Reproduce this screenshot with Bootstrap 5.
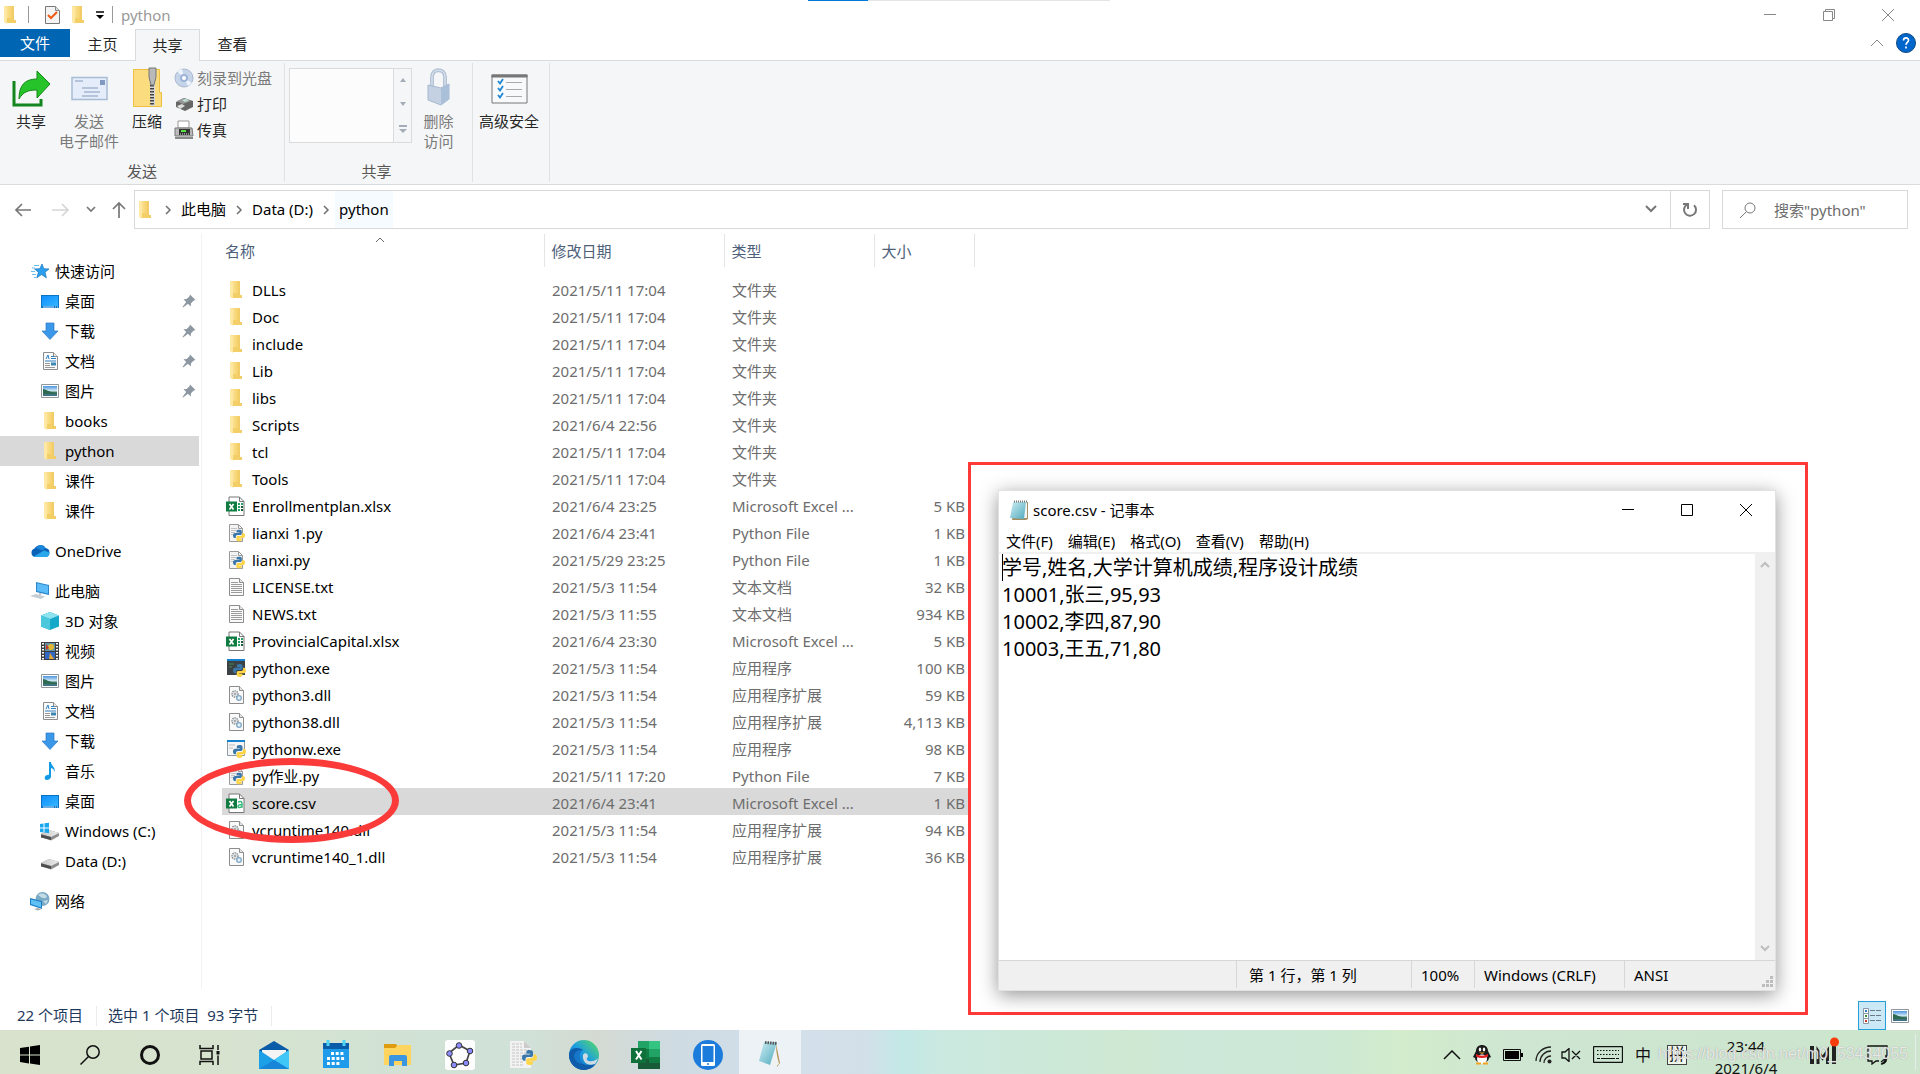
<!DOCTYPE html>
<html lang="zh-CN">
<head>
<meta charset="utf-8">
<meta name="viewport" content="width=device-width, initial-scale=1">
<title>python</title>
<link href="https://cdn.jsdelivr.net/npm/bootstrap@5.3.0/dist/css/bootstrap.min.css" rel="stylesheet">
<style>
  body { font-family: "Noto Sans", "Noto Sans CJK SC", sans-serif; font-size: 15px; line-height: 20px; color: #000; background: #fff; overflow: hidden; }
  button { background: none; border: 0; padding: 0; color: inherit; line-height: 20px; }
  a { color: inherit; text-decoration: none; }
  svg { display: block; flex: none; }
  .i20 { width: 20px; height: 20px; }
  .i30 { width: 30px; height: 30px; }

  /* title bar */
  .titlebar { height: 29px; padding-right: 3px; color: #999; }
  .titlebar .sep { width: 1px; height: 17px; background: #999; }
  .loadline { top: 0; left: 808px; width: 302px; height: 1px; background: linear-gradient(90deg, #0078d7 20%, #e5e5e5 20%); }
  .winbtn { width: 59px; height: 29px; }

  /* ribbon */
  .tabs { height: 32px; border-bottom: 1px solid #dadbdc; color: #262626; }
  .tabs .tab { height: 32px; width: 65px; padding-bottom: 2px; }
  .tabs .filetab { width: 70px; height: 28px; background: #0065b3; color: #fff; padding: 0; }
  .tabs .current { background: #f5f6f7; border: 1px solid #dadbdc; border-bottom: 0; }
  .ribbon { height: 124px; background: #f5f6f7; border-bottom: 1px solid #dadbdc; color: #262626; padding-top: 2px; }
  .rgroup { height: 119px; border-right: 1px solid #e0e1e2; }
  .rgroup .caption { color: #555; height: 20px; margin-bottom: 1px; }
  .big { display: flex; flex-direction: column; align-items: center; width: 58px; padding-top: 4px; white-space: nowrap; }
  .big svg { width: 40px; height: 40px; margin-bottom: 4px; }
  .off { color: #7a7a7a; }
  .smallbtns { padding-top: 2px; }
  .smallbtn { display: flex; align-items: center; gap: 3px; height: 26px; white-space: nowrap; }
  .gallery { width: 123px; height: 75px; margin-top: 5px; border: 1px solid #dadbdc; background: #fcfcfc; }
  .gallery + .big { width: 53px; }
  .gallery .scroller { width: 18px; border-left: 1px solid #dadbdc; background: #f5f6f7; }

  /* address bar */
  .addr { height: 49px; padding: 5px 12px 5px 14px; color: #000; }
  .arrows { width: 120px; gap: 16px; }
  .box { height: 39px; border: 1px solid #d9d9d9; }
  .crumbs { gap: 5px; }
  .crumb { height: 37px; line-height: 37px; padding: 0 4px; }
  .crumb.hot { background: #f6fbff; }
  .refresh { width: 39px; height: 37px; border-left: 1px solid #d9d9d9; }
  .search { width: 186px; margin-left: 12px; padding-left: 17px; gap: 18px; }
  .search input { border: 0; outline: 0; width: 120px; background: none; padding: 0; }
  .search input::placeholder { color: #6d6d6d; opacity: 1; }

  /* navigation pane */
  .side { width: 202px; padding-top: 22px; border-right: 1px solid #f2f2f2; margin-bottom: 12px; }
  .side a { display: flex; align-items: center; height: 30px; padding-left: 40px; gap: 5px; margin-right: 2px; }
  .side a.root { padding-left: 30px; }
  .side a.gapped { margin-top: 10px; }
  .side a.picked { background: #d9d9d9; }
  .side .pin { margin-left: auto; margin-right: 3px; }

  /* file table */
  .files { table-layout: fixed; width: 752px; border-collapse: collapse; }
  .files th { font-weight: 400; color: #4c607a; height: 33px; padding: 0 0 0 7px; border-right: 1px solid #e5e5e5; }
  .files th:first-child { padding-left: 3px; }
  .files td { height: 27px; padding: 2px 0 0 8px; color: #6d6d6d; white-space: nowrap; overflow: hidden; text-overflow: ellipsis; }
  .files td:first-child { color: #000; padding-left: 4px; }
  .files td:last-child { text-align: right; padding-right: 9px; }
  .files .picked td { background: #d9d9d9; }
  .files .picked td:last-child { background: linear-gradient(90deg, #d9d9d9 95%, #fff 95%); }
  .files .name { display: flex; align-items: center; gap: 6px; }
  .files .head + tbody::before { content: ""; display: block; height: 8px; }
  .sortmark { position: absolute; left: 157px; top: 2px; }
  .ring { left: 184px; top: 524px; width: 215px; height: 85px; border: 7px solid #fb3a3a; border-radius: 50%; pointer-events: none; }

  /* notepad */
  .frame { left: 968px; top: 228px; width: 840px; height: 553px; border: 3px solid #ff3838; padding: 25px 29px 21px 27px; }
  .pad { border: 1px solid #e2e2e2; box-shadow: 0 4px 18px rgba(0,0,0,.42); background: #fff; }
  .pad .cap { height: 38px; padding-left: 10px; }
  .pad .menu { height: 23px; padding-left: 7px; gap: 15px; }
  .pad .paper { border-top: 2px solid #f0f0f0; }
  .pad textarea { border: 0; outline: 0; resize: none; padding: 0 3px; font-size: 20px; line-height: 27px; overflow: hidden; }
  .caret { left: 3px; top: 0; width: 1px; height: 27px; background: #000; }
  .pad .bar { width: 20px; background: #f0f0f0; padding: 7px 0; }
  .pad .foot { height: 30px; background: #f0f0f0; border-top: 1px solid #d7d7d7; }
  .pad .foot span { border-left: 1px solid #d7d7d7; height: 27px; line-height: 29px; padding-left: 9px; }
  .pad .foot .where { padding-left: 12px; }

  /* status bar and taskbar */
  .status { height: 29px; color: #1e395b; padding: 0 10px 0 17px; }
  .status span { padding-bottom: 2px; }
  .status .rule { width: 1px; height: 20px; background: #ececec; margin: 0 11px 0 13px; }
  .viewbtn { width: 28px; height: 29px; border: 1px solid #26a0da; background: #cbe8f6; }
  .task { height: 44px; background: linear-gradient(90deg, #d8e2cc 0, #d7e3cf 12%, #d0e2d5 22%, #d0e2d8 27%, #d4dad2 31%, #cfdbe2 35%, #d3dfea 41%, #d3dfe8 45%, #c2e8e6 47%, #cbe9e0 49%, #cee8d2 59%, #cde8d9 62%, #cde8d4 69%, #d2eccc 73%, #cee6d2 79%, #cce5cc 100%); }
  .task .slot { width: 60px; height: 44px; padding-top: 6px; display: flex; align-items: center; justify-content: center; }
  .task .app { width: 62px; }
  .task .apps { margin-left: 3px; }
  .task .live { background: rgba(255,255,255,.6); }
  .tray { color: #111; padding: 5px 10px 0 0; }
  .tray .mi { margin: 0 19px 8px 17px; }
  .clock { width: 66px; line-height: 22px; white-space: nowrap; margin: 0 6px 0 18px; }
  .pinyin { width: 20px; height: 20px; border: 1px solid #444; background: #eef6ee; line-height: 17px; font-size: 16px; }
  .watermark { right: 12px; top: 14px; font: 16px/20px "Liberation Sans", sans-serif; color: rgba(255,255,255,.8); text-shadow: 0 0 1px #888; pointer-events: none; }
</style>
</head>
<body>
<svg width="0" height="0" class="position-absolute" aria-hidden="true">
  <defs>
    <linearGradient id="gf" x1="0" x2="1"><stop offset="0" stop-color="#ffe9a6"/><stop offset="1" stop-color="#f3cb5c"/></linearGradient>
    <linearGradient id="gb" x1="0" y1="0" x2="1" y2="1"><stop offset="0" stop-color="#0f8fff"/><stop offset="1" stop-color="#35b6ff"/></linearGradient>
    <linearGradient id="gsky" x1="0" y1="0" x2="0" y2="1"><stop offset="0" stop-color="#4d94e0"/><stop offset=".5" stop-color="#d5ecf5"/><stop offset=".6" stop-color="#4c7f6c"/><stop offset="1" stop-color="#3d6f8b"/></linearGradient>
    <linearGradient id="gdisk" x1="0" x2="1"><stop offset="0" stop-color="#c9c9c9"/><stop offset="1" stop-color="#ececec"/></linearGradient>
    <linearGradient id="gedge" x1="0" y1="1" x2="1" y2="0"><stop offset="0" stop-color="#0c59a4"/><stop offset=".5" stop-color="#1b9de2"/><stop offset="1" stop-color="#5ee05a"/></linearGradient>
    <linearGradient id="gnote" x1="0" y1="0" x2="1" y2="1"><stop offset="0" stop-color="#cdeef3"/><stop offset="1" stop-color="#4fa9bd"/></linearGradient>
    <symbol id="folder" viewBox="0 0 20 20"><path d="M4 1h10v14l2 1v2H6z" fill="#f4cf68"/><path d="M4 1h10v12H4z" fill="url(#gf)"/><path d="M12 1h2v14h2v2h-4z" fill="#f2cc66"/><path d="M4 1l3 2v16l-3-2z" fill="#ffe8a3"/></symbol>
    <symbol id="py" viewBox="0 0 12 12"><path d="M6 0C3.600 0 3.500 1 3.500 1.800V3h3v.5H2C.8 3.500 0 4.500 0 6s.7 2.600 1.800 2.600h1V7.200c0-1 .8-1.700 1.800-1.700h2.800c.8 0 1.400-.7 1.400-1.500V1.800C8.800.6 7.800 0 6 0z" fill="#3b77a8"/><path d="M6.200 12c2.300 0 2.500-1 2.500-1.800V9h-3v-.5h4.500C11.400 8.500 12 7.500 12 6s-.7-2.600-1.800-2.600h-.9v1.400c0 1-.8 1.700-1.800 1.700H4.800c-.8 0-1.400.7-1.400 1.500v2.200C3.400 11.400 4.400 12 6.200 12z" fill="#ffd548"/></symbol>
    <symbol id="page" viewBox="0 0 20 20"><path d="M3.500 1.500h10l4 4v13h-14z" fill="#fafafa" stroke="#8d8d8d"/><path d="M13.500 1.500v4h4" fill="#e7e7e7" stroke="#8d8d8d"/></symbol>
    <symbol id="txt" viewBox="0 0 20 20"><use href="#page"/><path d="M5 5.500h7M5 7.500h11M5 9.500h11M5 11.500h11M5 13.500h11M5 15.500h11" stroke="#9b9b9b"/></symbol>
    <symbol id="doc" viewBox="0 0 20 20"><use href="#page"/><path d="M6 8l2-4 1 4" stroke="#2c7fc1" fill="none"/><path d="M11 5.500h3M11 7.500h5M5 10h11" stroke="#2c7fc1"/><path d="M5 12.500h5M5 14.500h5M5 16.500h10" stroke="#999"/><path d="M11 11.500h5v3h-5z" fill="#3a86b4"/></symbol>
    <symbol id="dll" viewBox="0 0 20 20"><use href="#page"/><circle cx="9" cy="9" r="3" fill="none" stroke="#8b9299" stroke-width="1.500" stroke-dasharray="1.500 .7"/><circle cx="9" cy="9" r="1" fill="none" stroke="#8b9299"/><circle cx="13" cy="13" r="2.300" fill="#dff0fa" stroke="#7fa6c4" stroke-width="1.300"/></symbol>
    <symbol id="pyfile" viewBox="0 0 20 20"><path d="M3.500 1.500h9l4 4v13h-13z" fill="#f3f3f3" stroke="#9a9a9a"/><path d="M12.500 1.500v4h4" fill="none" stroke="#9a9a9a"/><path d="M5 5.500h6M5 7.500h5M5 9.500h4M5 11.500h3" stroke="#c2c2c2"/><use href="#py" x="7" y="6.500" width="12" height="12"/></symbol>
    <symbol id="exe" viewBox="0 0 20 20"><path d="M1 2h18v15H1z" fill="#3b4145"/><path d="M1 1h18v2H1z" fill="#1482d0"/><path d="M3 6h5M3 9h3" stroke="#3f8b4e"/><use href="#py" x="7" y="6" width="13" height="13"/></symbol>
    <symbol id="exew" viewBox="0 0 20 20"><path d="M1.500 2.500h17v14h-17z" fill="#f5f5f5" stroke="#8d9aa5"/><path d="M1 1h18v2H1z" fill="#1482d0"/><path d="M3 6h6M3 9h4" stroke="#bbb"/><use href="#py" x="7" y="6" width="13" height="13"/></symbol>
    <symbol id="xls0" viewBox="0 0 20 20"><path d="M3 1h10.500L18 5.500V19.500H3z" fill="#fff" stroke="#777"/><path d="M13.500 1v4.500H18" fill="none" stroke="#777"/><path d="M0 5.500h11v10H0z" fill="#107c41"/><path d="M3.500 8l4 5.500M7.500 8l-4 5.500" stroke="#fff" stroke-width="1.700"/></symbol>
    <symbol id="xls" viewBox="0 0 20 20"><use href="#xls0"/><path d="M12 8h2M12 11h2M12 14h2M15 8h2" stroke="#21a366" stroke-width="2"/><path d="M15 11h2M15 14h2" stroke="#185c37" stroke-width="2"/></symbol>
    <symbol id="csv" viewBox="0 0 20 20"><use href="#xls0"/><path d="M12 9.200c3-1.600 4-.4 4 1.500v4M16 11.500c-2.800 0-4 .5-4 1.800 0 1.800 3.500 1.600 4 0" fill="none" stroke="#33b979" stroke-width="1.500"/></symbol>
    <symbol id="desk" viewBox="0 0 20 20"><path d="M1 4h18v13H1z" fill="#0b73c4"/><path d="M2 5h16v10H2z" fill="url(#gb)"/><path d="M3 16h11M15 16h1M17 16h1" stroke="#cbe9ff"/></symbol>
    <symbol id="down" viewBox="0 0 20 20"><path d="M6 2h8v8h4l-8 8.500L2 10h4z" fill="#3b97e8" stroke="#2b79c7" stroke-width=".7"/></symbol>
    <symbol id="pic" viewBox="0 0 20 20"><path d="M1.500 3.500h17v13h-17z" fill="#fff" stroke="#8f979d"/><path d="M3 5h14v10H3z" fill="url(#gsky)"/><path d="M3 8c3 0 5 3 14 4v1H3z" fill="#2f6a52"/></symbol>
    <symbol id="star" viewBox="0 0 20 20"><path d="M12 3l1.800 4.700 5.200.3-4 3.300 1.400 5.500-4.900-3.200-4.700 3.200 1.600-5.500L4.600 8l5.200-.3z" fill="#2b9fee" stroke="#1472b8" stroke-width=".7"/><path d="M4 4.500h5M2 7h3M1 10.500h4M2 13.500h4M4 16.500h2" stroke="#67bdf2"/></symbol>
    <symbol id="cloud" viewBox="0 0 20 20"><path d="M4.500 16a4.500 4.500 0 0 1 0-8.500 6.500 6.500 0 0 1 11-.5 4.600 4.600 0 0 1 .5 9z" fill="#0a63b6"/><path d="M3 16L14 9.500l5.500 2a4.300 4.300 0 0 1-3.500 4.500z" fill="#28a8ea"/><path d="M9 4.200c4-1 6 1 6.500 3L12 9.500 6 7z" fill="#1a86d9"/></symbol>
    <symbol id="pc" viewBox="0 0 20 20"><path d="M6 1l13 3v10L6 11z" fill="#2b87cd"/><path d="M7 2.300l11 2.500v7.800L7 10z" fill="#5bbcf7"/><path d="M0 15l6-2 9 2.500-4 2.500z" fill="#c5ccd2"/><path d="M10 12v2" stroke="#889"/></symbol>
    <symbol id="cube" viewBox="0 0 20 20"><path d="M10 1l9 3.500v11L10 19l-9-3.500v-11z" fill="#16a8c9"/><path d="M10 1l9 3.500L10 8 1 4.500z" fill="#8fe3ef"/><path d="M1 4.500L10 8v11l-9-3.500z" fill="#4cc8dd"/></symbol>
    <symbol id="film" viewBox="0 0 20 20"><path d="M1 1h18v18H1z" fill="#3d3d3d"/><path d="M5 2h10v8H5z" fill="#5f94ac"/><path d="M5 11h10v7H5z" fill="#3469c3"/><circle cx="11" cy="6" r="3" fill="#e3b730"/><path d="M10 12l4 6H9z" fill="#e3a630"/><path d="M6 3l3 4-3 2z" fill="#c03a2b"/><path d="M3 2v17M17 2v17" stroke="#fff" stroke-width="2" stroke-dasharray="1.500 1.500"/></symbol>
    <symbol id="note" viewBox="0 0 20 20"><path d="M9 1h2c0 4 5 5 3.500 10-.5-3-2-3.500-3.500-4v8c0 3-2.500 4-4.500 4S4 16 6 14.500c1-.8 2-.9 3-.8z" fill="#139ae6"/></symbol>
    <symbol id="disk" viewBox="0 0 20 20"><path d="M1 12l8-4 10 3v3l-8 4.500L1 15z" fill="#8e8e8e"/><path d="M1 12l8-4 10 3-8 4z" fill="url(#gdisk)"/><path d="M1 12.500l10 2.500v3L1 15.500z" fill="#4e4e4e"/></symbol>
    <symbol id="diskc" viewBox="0 0 20 20"><use href="#disk" y="1"/><path d="M0 3l3.500-.5v4H0zM4.500 2.300L9 1.700v4.800H4.500zM0 7.500h3.500v4L0 11zM4.500 7.500H9v4.800l-4.500-.7z" fill="#19a8ee"/></symbol>
    <symbol id="net" viewBox="0 0 20 20"><circle cx="12.500" cy="8" r="7" fill="#79a9c4"/><path d="M8 4c4-3 8-1 9 2-3 3-6 0-9-2zM13 10l5-1-2 4z" fill="#c4dde5"/><path d="M0 7l12 3v8L0 14z" fill="#1e7fc3"/><path d="M1 8.500l10 2.500v5.500L1 13z" fill="#5fc0f5"/><path d="M4 18l4-1 3 1.500-3 1z" fill="#aaa"/></symbol>
    <symbol id="pinmark" viewBox="0 0 14 14"><path d="M8 .5l5.500 5.500-1.700.5-2.800 2.800-.3 3.200-2.700-2.700L1 13.500.5 13l3.700-5L1.500 5.300 4.700 5l2.800-2.800z" fill="#8c97a1"/></symbol>
    <symbol id="gt" viewBox="0 0 8 10"><path d="M2 1l4 4-4 4" fill="none" stroke="#6f6f6f" stroke-width="1.500"/></symbol>
    <symbol id="notepad" viewBox="0 0 20 20"><path d="M6 2h13v17l-2 1H3z" fill="#a58d62"/><path d="M5 2h13v16H4z" fill="#f3f6f6"/><path d="M4 2h13l-2 17-14-1z" fill="url(#gnote)"/><path d="M5 1.500h13" stroke="#777" stroke-width="2" stroke-dasharray="1 1"/></symbol>
  </defs>
</svg>

<div class="min-vh-100 d-flex flex-column position-relative">
  <header>
    <div class="loadline position-absolute"></div>
    <div class="titlebar d-flex align-items-center">
      <svg class="i20"><use href="#folder"/></svg>
      <span class="sep ms-2 me-3"></span>
      <svg class="ms-0 me-1" width="15" height="20" viewBox="0 0 15 20"><path d="M.5 1.500h10l4 4v13H.500z" fill="#f4f4f4" stroke="#777"/><path d="M10.500 1.500v4h4" fill="#ddd" stroke="#888"/><path d="M3 10l3 3 6-6" fill="none" stroke="#f05a14" stroke-width="2"/></svg>
      <svg class="i20 ms-1"><use href="#folder"/></svg>
      <svg class="ms-2" width="8" height="8" viewBox="0 0 8 8"><path d="M0 1h8" stroke="#000" stroke-width="1.500"/><path d="M0 4h8L4 8z" fill="#000"/></svg>
      <span class="sep ms-2 me-2"></span>
      <span>python</span>
      <div class="ms-auto d-flex">
        <button class="winbtn d-flex align-items-center justify-content-center" aria-label="最小化"><svg width="12" height="12"><path d="M0 5.500h12" stroke="#888"/></svg></button>
        <button class="winbtn d-flex align-items-center justify-content-center" aria-label="还原"><svg width="12" height="12" fill="none" stroke="#888"><path d="M.5 2.500h9v9h-9zM2.500 2.500v-2h9v9h-2"/></svg></button>
        <button class="winbtn d-flex align-items-center justify-content-center" aria-label="关闭"><svg width="12" height="12" stroke="#888"><path d="M0 0l12 12M12 0L0 12"/></svg></button>
      </div>
    </div>

    <nav class="tabs d-flex">
      <button class="tab filetab">文件</button>
      <button class="tab">主页</button>
      <button class="tab current">共享</button>
      <button class="tab">查看</button>
      <div class="ms-auto d-flex align-items-center gap-2 pe-1 pb-1">
        <button class="me-1" aria-label="折叠功能区"><svg width="14" height="8" fill="none" stroke="#888"><path d="M1 7l6-6 6 6"/></svg></button>
        <button aria-label="帮助"><svg width="20" height="20"><circle cx="10" cy="10" r="9.500" fill="#0066cc" stroke="#124a82"/><path d="M7.500 7.500c0-3.500 5.500-3.500 5 0-.2 1.800-2.500 2-2.500 4.300M10 13.500v2" stroke="#fff" stroke-width="1.700" fill="none"/></svg></button>
      </div>
    </nav>

    <section class="ribbon d-flex">
      <div class="rgroup d-flex flex-column" style="width:285px">
        <div class="d-flex flex-grow-1">
          <button class="big ps-1 align-self-start"><svg viewBox="0 0 40 40"><path d="M3 14v24h27v-6" fill="none" stroke="#13861f" stroke-width="3"/><path d="M8 32c0-14 6-20 18-20V4l13 13-13 14v-8c-9 0-14 2-18 9z" fill="#26c32a" stroke="#128a1b"/></svg>共享</button>
          <button class="big off align-self-start ps-1"><svg viewBox="0 0 40 40"><path d="M3 10.500h35v22H3z" fill="#e4edf9" stroke="#a9bcd6" stroke-width="1.500"/><path d="M6 14h8M13 21h16M15 25h16M13 29h16" stroke="#a5b6cf" stroke-width="1.500"/><path d="M31 13h5v5h-5z" fill="#8198c0"/></svg>发送<br>电子邮件</button>
          <button class="big align-self-start ps-1"><svg viewBox="0 0 40 40"><path d="M6.500 2.500h26v23h2v14h-28z" fill="#fbdc7f" stroke="#eebf42"/><path d="M22 1h6v38h-4" fill="#d7d7d7"/><path d="M25 12v27" stroke="#444" stroke-width="4" stroke-dasharray="1.500 1.500"/><path d="M22 1h7v9l-2 8h-3l-2-8z" fill="#b9b9b9" stroke="#777"/></svg>压缩</button>
          <div class="smallbtns">
            <button class="smallbtn off"><svg class="i20"><circle cx="10" cy="10" r="9" fill="#c6d4ea" stroke="#a9b8cf"/><path d="M10 10L3 3l5-2zM10 10l8 5-4 3z" fill="#eef4fc"/><circle cx="10" cy="10" r="4" fill="#9db4d8"/><circle cx="10" cy="10" r="2" fill="#fff"/></svg>刻录到光盘</button>
            <button class="smallbtn"><svg class="i20"><path d="M2 8l8-4 9 3v6l-8 4-9-4z" fill="#666"/><path d="M3 7l7-3 7 3-8 3z" fill="#999"/><path d="M8 6l4-1 3 1-4 2z" fill="#bde5d5"/><path d="M3 12l5-2 3 2-5 3z" fill="#ddd"/></svg>打印</button>
            <button class="smallbtn"><svg class="i20"><path d="M4 1h11v7H4z" fill="#fff" stroke="#999"/><path d="M1 8h17l1 8H1z" fill="#bbb" stroke="#777"/><path d="M5 9h11v6H5z" fill="#333"/><path d="M7 10h5v2H7z" fill="#5be23f"/><path d="M6 14h10" stroke="#ddd" stroke-dasharray="1 1"/><path d="M1 17h18v2H1z" fill="#888"/></svg>传真</button>
          </div>
        </div>
        <div class="caption text-center">发送</div>
      </div>
      <div class="rgroup d-flex flex-column" style="width:188px">
        <div class="d-flex flex-grow-1 ps-1">
          <div class="gallery d-flex justify-content-end">
            <div class="scroller d-flex flex-column align-items-center justify-content-between py-2">
              <svg width="8" height="6"><path d="M1 5h6L4 1z" fill="#a3adb8"/></svg>
              <svg width="8" height="6"><path d="M1 1h6L4 5z" fill="#a3adb8"/></svg>
              <svg width="8" height="9"><path d="M0 1h8" stroke="#a3adb8" stroke-width="2"/><path d="M0 4h8L4 8z" fill="#a3adb8"/></svg>
            </div>
          </div>
          <button class="big off align-self-start"><svg viewBox="0 0 40 40"><path d="M13 20V10c0-9 13-9 13 0v10" fill="none" stroke="#b4c3d6" stroke-width="4"/><path d="M13 19V10c0-9 13-9 13 0v10" fill="none" stroke="#e3ebf3" stroke-width="1"/><path d="M9 18l13 3 8-4v15l-8 6-13-5z" fill="#c3d1e3" stroke="#a6b8d0"/><path d="M22 21v17l8-6V17z" fill="#aabfd8"/></svg>删除<br>访问</button>
        </div>
        <div class="caption text-center pe-1">共享</div>
      </div>
      <div class="rgroup" style="width:77px">
        <button class="big w-100 pe-1"><svg viewBox="0 0 40 40"><path d="M3 8h35v28H3z" fill="#f7f9fa" stroke="#777"/><path d="M2.500 7.500h36v3h-36z" fill="#777"/><path d="M17 15.500h16M17 22.500h16M17 29.500h16" stroke="#aaa"/><path d="M9 14l2 2.500L14 12M9 21l2 2.500L14 19M9 28l2 2.500L14 26" fill="none" stroke="#1d86d6" stroke-width="1.800"/></svg>高级安全</button>
      </div>
    </section>

    <section class="addr d-flex align-items-center">
      <div class="arrows d-flex align-items-center">
        <button class="me-1" aria-label="后退"><svg width="18" height="14" fill="none" stroke="#777" stroke-width="1.700"><path d="M17 7H2M8 1L2 7l6 6"/></svg></button>
        <button aria-label="前进"><svg width="18" height="14" fill="none" stroke="#d5d5d5" stroke-width="1.700"><path d="M0 7h15M10 1l6 6-6 6"/></svg></button>
        <button aria-label="最近的位置"><svg width="10" height="8" fill="none" stroke="#777" stroke-width="1.700"><path d="M1 1l4 4 4-4"/></svg></button>
        <button aria-label="上移"><svg width="14" height="18" fill="none" stroke="#777" stroke-width="1.700"><path d="M7 17V2M1 8l6-6 6 6"/></svg></button>
      </div>
      <div class="box crumbs flex-grow-1 d-flex align-items-center">
        <svg class="i20 me-1"><use href="#folder"/></svg>
        <svg width="8" height="10"><use href="#gt"/></svg>
        <a class="crumb" href="#">此电脑</a>
        <svg width="8" height="10"><use href="#gt"/></svg>
        <a class="crumb" href="#">Data (D:)</a>
        <svg width="8" height="10"><use href="#gt"/></svg>
        <a class="crumb hot" href="#">python</a>
        <button class="ms-auto me-1 px-1" aria-label="展开"><svg width="12" height="9" fill="none" stroke="#777" stroke-width="2"><path d="M1 1l5 5 5-5"/></svg></button>
        <button class="refresh d-flex align-items-center justify-content-center" aria-label="刷新"><svg width="16" height="16" fill="none" stroke="#777" stroke-width="2"><path d="M12 3.200A6 6 0 1 1 5 2.500M1 2h5v5"/></svg></button>
      </div>
      <label class="box search d-flex align-items-center">
        <svg width="16" height="16" fill="none" stroke="#777"><circle cx="10" cy="6" r="5"/><path d="M6.500 9.500L0 16"/></svg>
        <input type="search" placeholder='搜索"python"' aria-label="搜索">
      </label>
    </section>
  </header>

  <main class="flex-grow-1 d-flex position-relative">
    <nav class="side">
      <a class="root" href="#"><svg class="i20"><use href="#star"/></svg>快速访问</a>
      <a href="#"><svg class="i20"><use href="#desk"/></svg>桌面<svg class="pin" width="14" height="14"><use href="#pinmark"/></svg></a>
      <a href="#"><svg class="i20"><use href="#down"/></svg>下载<svg class="pin" width="14" height="14"><use href="#pinmark"/></svg></a>
      <a href="#"><svg class="i20"><use href="#doc"/></svg>文档<svg class="pin" width="14" height="14"><use href="#pinmark"/></svg></a>
      <a href="#"><svg class="i20"><use href="#pic"/></svg>图片<svg class="pin" width="14" height="14"><use href="#pinmark"/></svg></a>
      <a href="#"><svg class="i20"><use href="#folder"/></svg>books</a>
      <a class="picked" href="#"><svg class="i20"><use href="#folder"/></svg>python</a>
      <a href="#"><svg class="i20"><use href="#folder"/></svg>课件</a>
      <a href="#"><svg class="i20"><use href="#folder"/></svg>课件</a>
      <a class="root gapped" href="#"><svg class="i20"><use href="#cloud"/></svg>OneDrive</a>
      <a class="root gapped" href="#"><svg class="i20"><use href="#pc"/></svg>此电脑</a>
      <a href="#"><svg class="i20"><use href="#cube"/></svg>3D 对象</a>
      <a href="#"><svg class="i20"><use href="#film"/></svg>视频</a>
      <a href="#"><svg class="i20"><use href="#pic"/></svg>图片</a>
      <a href="#"><svg class="i20"><use href="#doc"/></svg>文档</a>
      <a href="#"><svg class="i20"><use href="#down"/></svg>下载</a>
      <a href="#"><svg class="i20"><use href="#note"/></svg>音乐</a>
      <a href="#"><svg class="i20"><use href="#desk"/></svg>桌面</a>
      <a href="#"><svg class="i20"><use href="#diskc"/></svg>Windows (C:)</a>
      <a href="#"><svg class="i20"><use href="#disk"/></svg>Data (D:)</a>
      <a class="root gapped" href="#"><svg class="i20"><use href="#net"/></svg>网络</a>
    </nav>

    <div class="ps-1 ms-3 position-relative">
      <svg class="sortmark" width="10" height="7" fill="none" stroke="#666"><path d="M1 6l4-4 4 4"/></svg>
      <table class="files">
        <colgroup><col style="width:322px"><col style="width:180px"><col style="width:150px"><col style="width:100px"></colgroup>
        <thead class="head"><tr><th>名称</th><th>修改日期</th><th>类型</th><th>大小</th></tr></thead>
        <tbody>
        <tr><td><div class="name"><svg class="i20"><use href="#folder"/></svg>DLLs</div></td><td>2021/5/11 17:04</td><td>文件夹</td><td></td></tr>
        <tr><td><div class="name"><svg class="i20"><use href="#folder"/></svg>Doc</div></td><td>2021/5/11 17:04</td><td>文件夹</td><td></td></tr>
        <tr><td><div class="name"><svg class="i20"><use href="#folder"/></svg>include</div></td><td>2021/5/11 17:04</td><td>文件夹</td><td></td></tr>
        <tr><td><div class="name"><svg class="i20"><use href="#folder"/></svg>Lib</div></td><td>2021/5/11 17:04</td><td>文件夹</td><td></td></tr>
        <tr><td><div class="name"><svg class="i20"><use href="#folder"/></svg>libs</div></td><td>2021/5/11 17:04</td><td>文件夹</td><td></td></tr>
        <tr><td><div class="name"><svg class="i20"><use href="#folder"/></svg>Scripts</div></td><td>2021/6/4 22:56</td><td>文件夹</td><td></td></tr>
        <tr><td><div class="name"><svg class="i20"><use href="#folder"/></svg>tcl</div></td><td>2021/5/11 17:04</td><td>文件夹</td><td></td></tr>
        <tr><td><div class="name"><svg class="i20"><use href="#folder"/></svg>Tools</div></td><td>2021/5/11 17:04</td><td>文件夹</td><td></td></tr>
        <tr><td><div class="name"><svg class="i20"><use href="#xls"/></svg>Enrollmentplan.xlsx</div></td><td>2021/6/4 23:25</td><td>Microsoft Excel ...</td><td>5 KB</td></tr>
        <tr><td><div class="name"><svg class="i20"><use href="#pyfile"/></svg>lianxi 1.py</div></td><td>2021/6/4 23:41</td><td>Python File</td><td>1 KB</td></tr>
        <tr><td><div class="name"><svg class="i20"><use href="#pyfile"/></svg>lianxi.py</div></td><td>2021/5/29 23:25</td><td>Python File</td><td>1 KB</td></tr>
        <tr><td><div class="name"><svg class="i20"><use href="#txt"/></svg>LICENSE.txt</div></td><td>2021/5/3 11:54</td><td>文本文档</td><td>32 KB</td></tr>
        <tr><td><div class="name"><svg class="i20"><use href="#txt"/></svg>NEWS.txt</div></td><td>2021/5/3 11:55</td><td>文本文档</td><td>934 KB</td></tr>
        <tr><td><div class="name"><svg class="i20"><use href="#xls"/></svg>ProvincialCapital.xlsx</div></td><td>2021/6/4 23:30</td><td>Microsoft Excel ...</td><td>5 KB</td></tr>
        <tr><td><div class="name"><svg class="i20"><use href="#exe"/></svg>python.exe</div></td><td>2021/5/3 11:54</td><td>应用程序</td><td>100 KB</td></tr>
        <tr><td><div class="name"><svg class="i20"><use href="#dll"/></svg>python3.dll</div></td><td>2021/5/3 11:54</td><td>应用程序扩展</td><td>59 KB</td></tr>
        <tr><td><div class="name"><svg class="i20"><use href="#dll"/></svg>python38.dll</div></td><td>2021/5/3 11:54</td><td>应用程序扩展</td><td>4,113 KB</td></tr>
        <tr><td><div class="name"><svg class="i20"><use href="#exew"/></svg>pythonw.exe</div></td><td>2021/5/3 11:54</td><td>应用程序</td><td>98 KB</td></tr>
        <tr><td><div class="name"><svg class="i20"><use href="#pyfile"/></svg>py作业.py</div></td><td>2021/5/11 17:20</td><td>Python File</td><td>7 KB</td></tr>
        <tr class="picked"><td><div class="name"><svg class="i20"><use href="#csv"/></svg>score.csv</div></td><td>2021/6/4 23:41</td><td>Microsoft Excel ...</td><td>1 KB</td></tr>
        <tr><td><div class="name"><svg class="i20"><use href="#dll"/></svg>vcruntime140.dll</div></td><td>2021/5/3 11:54</td><td>应用程序扩展</td><td>94 KB</td></tr>
        <tr><td><div class="name"><svg class="i20"><use href="#dll"/></svg>vcruntime140_1.dll</div></td><td>2021/5/3 11:54</td><td>应用程序扩展</td><td>36 KB</td></tr>
        </tbody>
      </table>
    </div>

    <div class="ring position-absolute"></div>

    <div class="frame position-absolute d-flex">
      <section class="pad flex-grow-1 d-flex flex-column">
        <div class="cap d-flex align-items-center">
          <svg class="i20"><use href="#notepad"/></svg>
          <span class="ms-1">score.csv - 记事本</span>
          <div class="ms-auto d-flex">
            <button class="winbtn d-flex align-items-center justify-content-center" aria-label="最小化"><svg width="12" height="12"><path d="M0 5.500h12" stroke="#000"/></svg></button>
            <button class="winbtn d-flex align-items-center justify-content-center" aria-label="最大化"><svg width="12" height="12" fill="none" stroke="#000"><path d="M.5.500h11v11H.500z"/></svg></button>
            <button class="winbtn d-flex align-items-center justify-content-center" aria-label="关闭"><svg width="12" height="12" stroke="#000"><path d="M0 0l12 12M12 0L0 12"/></svg></button>
          </div>
        </div>
        <nav class="menu d-flex align-items-center">
          <button>文件(F)</button><button>编辑(E)</button><button>格式(O)</button><button>查看(V)</button><button>帮助(H)</button>
        </nav>
        <div class="paper flex-grow-1 d-flex position-relative">
          <textarea class="flex-grow-1" aria-label="score.csv" spellcheck="false">学号,姓名,大学计算机成绩,程序设计成绩
10001,张三,95,93
10002,李四,87,90
10003,王五,71,80</textarea>
          <div class="caret position-absolute"></div>
          <div class="bar d-flex flex-column justify-content-between align-items-center">
            <svg width="10" height="8" fill="none" stroke="#bdbdbd" stroke-width="2"><path d="M1 6l4-4 4 4"/></svg>
            <svg width="10" height="8" fill="none" stroke="#bdbdbd" stroke-width="2"><path d="M1 1l4 4 4-4"/></svg>
          </div>
        </div>
        <div class="foot d-flex align-items-start position-relative">
          <span class="where ms-auto" style="width:175px">第 1 行，第 1 列</span>
          <span style="width:63px">100%</span>
          <span style="width:150px">Windows (CRLF)</span>
          <span style="width:151px">ANSI</span>
          <svg class="position-absolute bottom-0 end-0" width="14" height="14" fill="#bdbdbd"><path d="M9 0h3v3H9zM5 4h3v3H5zM9 4h3v3H9zM1 8h3v3H1zM5 8h3v3H5zM9 8h3v3H9z"/></svg>
        </div>
      </section>
    </div>
  </main>

  <footer>
    <div class="status d-flex align-items-center">
      <span>22 个项目</span><i class="rule"></i>
      <span>选中 1 个项目&nbsp; 93 字节</span><i class="rule"></i>
      <button class="viewbtn ms-auto d-flex align-items-center justify-content-center" aria-label="详细信息"><svg width="18" height="16"><path d="M.5.500h5v5h-5zM.5 5.500h5v5h-5zM.5 10.500h5v5h-5z" fill="#fff" stroke="#8a98a5"/><path d="M2 2h2v2H2z" fill="#2b7bc0"/><path d="M2 7h2v2H2z" fill="#3a8a43"/><path d="M2 12h2v2H2z" fill="#c0392b"/><path d="M7 2.500h11M7 7.500h11M7 12.500h11" stroke="#6b7a88" stroke-dasharray="5 1"/></svg></button>
      <button class="ms-1" aria-label="大图标"><svg class="i20"><use href="#pic"/></svg></button>
    </div>
    <div class="task d-flex position-relative">
      <button class="slot" aria-label="开始"><svg width="20" height="20"><path d="M0 3l9-1.300V9.500H0zM10 1.500L20 0v9.500H10zM0 10.500h9v8L0 17zM10 10.500h10V20l-10-1.500z"/></svg></button>
      <button class="slot" aria-label="搜索"><svg width="20" height="20" fill="none" stroke="#111" stroke-width="1.500"><circle cx="13" cy="7" r="6.200"/><path d="M8.500 11.500L.5 19.500"/></svg></button>
      <button class="slot" aria-label="Cortana"><svg width="22" height="22" fill="none"><circle cx="11" cy="11" r="8.500" stroke="#111" stroke-width="3"/></svg></button>
      <button class="slot" aria-label="任务视图"><svg width="22" height="20" fill="none" stroke="#111" stroke-width="1.500"><path d="M1 0v3.500h13V0M1 20v-3.500h13V20M2 6h11v8H2zM19 0v5M19 10.500V20"/><path d="M17.500 6h3v3.500h-3z" fill="#111" stroke="none"/></svg></button>
      <div class="apps d-flex">
      <button class="slot app" aria-label="邮件"><svg class="i30" viewBox="0 0 30 30"><path d="M0 10L15 1l15 9v6H0z" fill="#0a5ba8"/><path d="M3 10h24v8L15 24 3 18z" fill="#f4f4f4"/><path d="M0 10l15 10 15-10v19H0z" fill="#1ba0e8"/><path d="M15 20L30 10v19z" fill="#41c7f7"/><path d="M0 29l15-9 15 9z" fill="#1886d8"/></svg></button>
      <button class="slot app" aria-label="日历"><svg class="i30" viewBox="0 0 30 30"><path d="M2 3h26v8H2z" fill="#0a5ba8"/><path d="M2 9h26v19H2z" fill="#1e9bea"/><path d="M7 0v6M23 0v6" stroke="#4fd3f5" stroke-width="3"/><path d="M10 13.500h14M6 18.500h18M6 23.500h13" stroke="#fff" stroke-width="3" stroke-dasharray="3 1.700"/></svg></button>
      <button class="slot app" aria-label="文件资源管理器"><svg class="i30" viewBox="0 0 30 30"><path d="M1 4h12l2 3h-2v4H1z" fill="#e09c10"/><path d="M1 8h11l3-3h13v20H1z" fill="#ffd560"/><path d="M6 26v-9q0-2 2-2h14q2 0 2 2v9h-5v-5h-8v5z" fill="#3a96e0"/></svg></button>
      <button class="slot app" aria-label="GeoGebra"><svg class="i30" viewBox="0 0 30 30"><rect width="30" height="30" rx="3" fill="#fdfdfd"/><path d="M14 5l11 6-4 12-12 2-5-12z" fill="none" stroke="#444" stroke-width="1.700"/><g fill="#8b8bff" stroke="#333"><circle cx="14" cy="5.500" r="2.800"/><circle cx="25" cy="11" r="2.800"/><circle cx="21" cy="23" r="2.800"/><circle cx="9" cy="25" r="2.800"/><circle cx="4.500" cy="13.500" r="2.800"/></g></svg></button>
      <button class="slot app" aria-label="IDLE"><svg class="i30" viewBox="0 0 30 30"><path d="M3 1h14l7 7v20H3z" fill="#f2f2f2"/><path d="M17 1v7h7z" fill="#ccc"/><path d="M5 4h10M5 7h10M5 10h17M5 13h15M5 16h11M5 19h10M5 22h12M5 25h12" stroke="#c5c5c5" stroke-dasharray="3 1"/><use href="#py" x="15" y="10" width="15" height="15"/></svg></button>
      <button class="slot app" aria-label="Edge"><svg class="i30" viewBox="0 0 30 30"><circle cx="15" cy="15" r="15" fill="url(#gedge)"/><path d="M0 15c0-7 9-9 14-5-4 1-5 5-4 9 2 6 10 8 17 4-3 5-8 7-12 7C6 30 0 23 0 15z" fill="#0f5cab"/><path d="M14 10c-4 2-5 9 0 14-5 0-9-4-9-8 0-3 4-7 9-6z" fill="#1676c9"/><path d="M14 15c1-3 5-2 5 1 0 2-2 2-1 4 2 2 8 2 11-2-1 3-2 5-3 6-8 3-13-3-12-9z" fill="#cfdbe2"/></svg></button>
      <button class="slot app" aria-label="Excel"><svg class="i30" viewBox="0 0 30 30"><path d="M7 1h22v28H7z" fill="#21a366"/><path d="M18 1h11v8H18z" fill="#33c481"/><path d="M7 9h11v12H7z" fill="#107c41"/><path d="M7 19h22v10H7z" fill="#185c37"/><path d="M18 17h11v6H18z" fill="#107c41"/><path d="M0 8h15v15H0z" fill="#0f7039"/><path d="M5 11l5.500 8.500M10.500 11L5 19.500" stroke="#fff" stroke-width="2"/></svg></button>
      <button class="slot app" aria-label="手机助手"><svg class="i30" viewBox="0 0 30 30"><circle cx="15" cy="15" r="15" fill="#1c7cdc"/><rect x="8" y="4" width="14" height="22" rx="1.500" fill="#fff"/><path d="M9.500 6h11v16h-11z" fill="#1c7cdc"/><circle cx="15" cy="24" r="1" fill="#1c7cdc"/></svg></button>
      <button class="slot app live" aria-label="记事本"><svg class="i30" viewBox="0 0 30 30"><path d="M21 3l4 20-3 4z" fill="#b7965b"/><path d="M19 3l5 21-4 3-7-3z" fill="#eef2f3"/><path d="M9 2h13l-7 23-11-4z" fill="url(#gnote)"/><path d="M10 2.500l12 1" stroke="#555" stroke-width="3" stroke-dasharray="1.500 1"/></svg></button>
      </div>

      <div class="tray ms-auto d-flex align-items-center gap-2">
        <button class="me-1" aria-label="显示隐藏的图标"><svg width="18" height="10" fill="none" stroke="#111" stroke-width="1.500"><path d="M1 9l8-8 8 8"/></svg></button>
        <svg width="18" height="20"><path d="M3 6c0-8 12-8 12 0l3 6-2 1c0 6-14 6-14 0l-2-1z" fill="#1b1b1b"/><ellipse cx="9" cy="14" rx="5" ry="4.500" fill="#fff"/><ellipse cx="7" cy="4.500" rx="1.200" ry="2" fill="#fff"/><ellipse cx="11" cy="4.500" rx="1.200" ry="2" fill="#fff"/><path d="M6 7.500h6L9 9z" fill="#f5a623"/><path d="M3 9q6 3.500 12 0v2.500q-6 3-12 0z" fill="#e02020"/><path d="M3 18.500h5M10 18.500h5" stroke="#f5a623" stroke-width="2"/></svg>
        <svg class="ms-1" width="20" height="12"><path d="M.5.500h17v11H.500z" fill="none" stroke="#111"/><path d="M2 2h14v8H2zM18 4h2v4h-2z"/></svg>
        <svg class="ms-1" width="18" height="18" fill="none" stroke="#222" stroke-width="1.300"><path d="M1 15C1 7 8 1 16 1M5 16c0-6 5-11 11-11M9 17c0-4 3-7 7-7"/><circle cx="14.500" cy="15.500" r="2" fill="#222" stroke="none"/></svg>
        <svg width="20" height="14" fill="none" stroke="#111" stroke-width="1.300"><path d="M1 4h3l4-3.500v13L4 10H1zM11 3l8 8M19 3l-8 8"/></svg>
        <svg class="ms-1" width="30" height="17" fill="none" stroke="#111"><rect x=".5" y=".5" width="29" height="16" rx="1" stroke-width="1.300"/><path d="M4 4.500h22M4 8.500h22" stroke-dasharray="1.500 1.500"/><path d="M4 12.500h3M8 12.500h14M23 12.500h3"/></svg>
        <span class="fs-6 ms-1">中</span>
        <span class="pinyin text-center ms-2">拼</span>
        <div class="clock text-center align-self-start">23:44<br>2021/6/4</div>
        <svg class="mi" width="30" height="28"><path d="M2 9v18M24 9v18" stroke="#222" stroke-width="4"/><path d="M8 27V14l4.500 7 5-7v13" fill="none" stroke="#222" stroke-width="3"/><circle cx="24.500" cy="5" r="4.500" fill="#f73d0b"/></svg>
        <button class="me-3" aria-label="通知"><svg width="22" height="20" fill="none" stroke="#111" stroke-width="1.300"><path d="M20 11V1H1v15h4v3l4-3h3"/><path d="M19 10c2 4 0 9-5 9 3-1 5-4 5-9zM14 17l5-4"/></svg></button>
      </div>
      <div class="border-start border-secondary-subtle my-1 pe-1"></div>
      <div class="watermark position-absolute">https://blog.csdn.net/m0_53434055</div>
    </div>
  </footer>
</div>
<script src="https://cdn.jsdelivr.net/npm/bootstrap@5.3.0/dist/js/bootstrap.bundle.min.js"></script>
</body>
</html>
